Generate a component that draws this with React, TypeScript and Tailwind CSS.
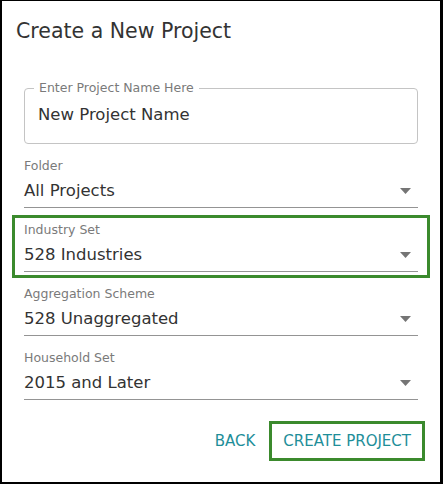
const fields = [
  { label: "Folder", value: "All Projects", active: false },
  { label: "Industry Set", value: "528 Industries", active: true },
  { label: "Aggregation Scheme", value: "528 Unaggregated", active: false },
  { label: "Household Set", value: "2015 and Later", active: false },
];

function Caret() {
  return (
    <svg width="11" height="6" viewBox="0 0 11 6" className="shrink-0">
      <path d="M0 0 L11 0 L5.5 6 Z" fill="#757575" />
    </svg>
  );
}

function SelectField({ label, value, active }: { label: string; value: string; active: boolean }) {
  return (
    <div className={`border-[3px] px-[9px] pt-[4px] pb-[3px] ${active ? "border-[#3b8a2d]" : "border-transparent"}`}>
      <div className="text-[12.5px] leading-4 text-[#7a7a7a]">{label}</div>
      <div className="mt-[5px] flex items-center justify-between border-b border-[#949494] pb-[4px] pr-[7px]">
        <span className="text-[16.5px] leading-6 text-[#333]">{value}</span>
        <Caret />
      </div>
    </div>
  );
}

export default function App() {
  return (
    <div
      className="w-[443px] h-[484px] bg-white border-black border-l-2 border-r-[3px] border-t border-b-[2px] flex flex-col"
      style={{ fontFamily: "'DejaVu Sans', sans-serif" }}
    >
      <h1 className="pl-[14px] pt-[18px] text-[20.5px] leading-6 text-[#333]">Create a New Project</h1>

      {/* NAME INPUT */}
      <div className="relative mx-[22px] mt-[45px] h-[56px] rounded-[4px] border border-[#c4c4c4]">
        <span className="absolute left-[9px] -top-[9px] bg-white px-[5px] text-[12.5px] leading-4 text-[#7a7a7a]">
          Enter Project Name Here
        </span>
        <div className="pl-[13px] pt-[14px] text-[16.5px] leading-6 text-[#333]">New Project Name</div>
      </div>

      <div className="mt-[7px] mx-[10px] flex flex-col gap-px">
        {fields.map((f, i) => (
          <SelectField key={i} label={f.label} value={f.value} active={f.active} />
        ))}
      </div>

      <div className="mt-[15px] mr-[15px] flex items-center justify-end gap-[11px]">
        <button className="px-[3px] py-[8px] text-[15px] leading-6 text-[#1e8e99]">BACK</button>
        <button className="h-[40px] border-[3px] border-[#3b8a2d] px-[11px] text-[15px] leading-6 text-[#1e8e99]">
          CREATE PROJECT
        </button>
      </div>
    </div>
  );
}
